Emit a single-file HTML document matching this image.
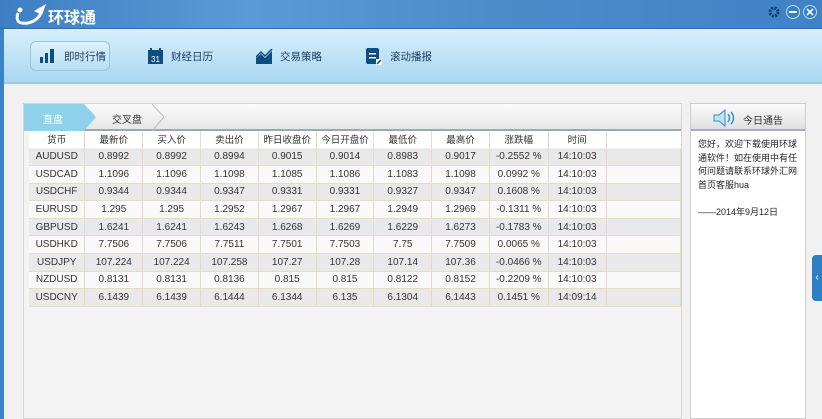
<!DOCTYPE html>
<html><head><meta charset="utf-8"><style>
*{margin:0;padding:0;box-sizing:border-box}
body{width:822px;height:419px;overflow:hidden;position:relative;background:#efefef;font-family:"Liberation Sans","Noto Sans CJK SC",sans-serif;font-size:10px;color:#333}
.title{position:absolute;left:0;top:0;width:822px;height:29px;background:linear-gradient(90deg,#3d7fc3 0%,#5a9ad6 30%,#4d8ccb 60%,#3f82c6 100%);border-bottom:1px solid #2f6eae}
.tool{position:absolute;left:4px;top:29px;width:818px;height:55px;background:linear-gradient(#d6effb,#aad7f1);border-bottom:2px solid #9ec7e2}
.lb{position:absolute;left:0;top:29px;width:4px;height:390px;background:#3b82c8}
.main{position:absolute;left:4px;top:86px;width:818px;height:333px;background:#f1f1f1}
.panel{position:absolute;left:23px;top:103px;width:659px;height:316px;background:#f3f3f3;border:1px solid #d5d5d5}
.tabs{height:27px;background:linear-gradient(#fbfbfb,#e6e6e6);border-bottom:2px solid #9aa;position:relative}
table{border-collapse:collapse;position:absolute;left:5px;top:27px;background:#fff}
td{height:17.6px;text-align:center;border-right:1px solid #e6dcc0;border-bottom:1px solid #e6dcc0;font-size:10px}
tr:nth-child(even) td{background:#e9e9e9}
tr:nth-child(odd) td{background:#f9f9f9}
tr.h td{background:#fff;border-bottom:1px solid #eee;height:17px;font-size:9.5px}
.rp{position:absolute;left:690px;top:103px;width:116px;height:316px;background:#fff;border:1px solid #ccc}
.rh{height:27px;background:linear-gradient(#fafafa,#e0e0e0);border-bottom:2px solid #aab;position:relative}
.tb{position:absolute;top:15px;height:24px;display:flex;align-items:center;font-size:10.5px;color:#1d3b5b}
</style></head><body>
<div class="title">
<svg style="position:absolute;left:12px;top:3px" width="36" height="24"><path d="M6 10 Q2 22 16 20 Q26 18 30 8" fill="none" stroke="#fff" stroke-width="3"/><circle cx="8" cy="7" r="2.5" fill="#fff"/><path d="M22 8 L34 1 L30 12 Z" fill="#fff"/></svg>
<div style="position:absolute;left:48px;top:4px;color:#fff;font-weight:bold;font-size:16px">环球通</div>
<svg style="position:absolute;left:767px;top:4px" width="52" height="16"><circle cx="7" cy="8" r="4" fill="none" stroke="#0b3f6e" stroke-width="3" stroke-dasharray="2 1.2"/><circle cx="26" cy="8" r="6.5" fill="#2f7fc6" stroke="#cde" /><rect x="22" y="7" width="8" height="2" fill="#fff"/><circle cx="43" cy="8" r="6.5" fill="#2f7fc6" stroke="#cde"/><path d="M40 5 L46 11 M46 5 L40 11" stroke="#fff" stroke-width="1.6"/></svg>
</div>
<div class="tool">
<div style="position:absolute;left:26px;top:12px;width:80px;height:30px;border:1px solid #9cc3df;border-radius:6px;background:linear-gradient(#def1fb,#b7def3)"></div>
<div class="tb" style="left:36px"><svg width="16" height="14"><rect x="0" y="8" width="3" height="6" fill="#0d4d82"/><rect x="5" y="4" width="3" height="10" fill="#0d4d82"/><rect x="10" y="0" width="4" height="14" fill="#0d4d82"/></svg><span style="margin-left:8px">即时行情</span></div>
<div class="tb" style="left:144px"><svg width="16" height="16"><rect x="0" y="2" width="15" height="14" fill="#0d4d82"/><rect x="2" y="0" width="2" height="4" fill="#0d4d82"/><rect x="11" y="0" width="2" height="4" fill="#0d4d82"/><text x="3" y="14" font-size="8" fill="#fff" font-family="Liberation Sans">31</text></svg><span style="margin-left:7px">财经日历</span></div>
<div class="tb" style="left:252px"><svg width="17" height="15"><path d="M0 15 V9 L5 5 L9 9 L16 2 V15 Z" fill="#0d4d82"/><path d="M0 8 L5 3 L9 7 L16 0" stroke="#0d4d82" stroke-width="1.5" fill="none"/></svg><span style="margin-left:7px">交易策略</span></div>
<div class="tb" style="left:362px"><svg width="16" height="17"><rect x="0" y="0" width="13" height="16" rx="2" fill="#0d4d82"/><rect x="3" y="5" width="7" height="1.5" fill="#fff"/><rect x="3" y="9" width="7" height="1.5" fill="#fff"/><rect x="10" y="11" width="6" height="6" fill="#fff"/><path d="M11 16 L15 12" stroke="#0d4d82" stroke-width="1.5"/></svg><span style="margin-left:8px">滚动播报</span></div>
</div>
<div class="lb"></div>
<div class="main"></div>
<div class="panel">
<div class="tabs">
<svg style="position:absolute;left:0;top:0" width="140" height="27"><path d="M0 0 H60 L72 13 L60 27 H0 Z" fill="#8fd0ea"/><path d="M128 0 L140 13 L128 27" fill="none" stroke="#bbb"/></svg>
<span style="position:absolute;left:19px;top:7px;color:#fff;font-size:10px">直盘</span>
<span style="position:absolute;left:88px;top:7px;font-size:10px;color:#333">交叉盘</span>
</div>
<table>
<tr class="h"><td style="width:56px">货币</td><td style="width:58px">最新价</td><td style="width:58px">买入价</td><td style="width:58px">卖出价</td><td style="width:58px">昨日收盘价</td><td style="width:58px">今日开盘价</td><td style="width:58px">最低价</td><td style="width:58px">最高价</td><td style="width:59px">涨跌幅</td><td style="width:58px">时间</td><td style="width:75px;border-right:none"></td></tr>
<tr><td>AUDUSD</td><td>0.8992</td><td>0.8992</td><td>0.8994</td><td>0.9015</td><td>0.9014</td><td>0.8983</td><td>0.9017</td><td>-0.2552 %</td><td>14:10:03</td><td></td></tr>
<tr><td>USDCAD</td><td>1.1096</td><td>1.1096</td><td>1.1098</td><td>1.1085</td><td>1.1086</td><td>1.1083</td><td>1.1098</td><td>0.0992 %</td><td>14:10:03</td><td></td></tr>
<tr><td>USDCHF</td><td>0.9344</td><td>0.9344</td><td>0.9347</td><td>0.9331</td><td>0.9331</td><td>0.9327</td><td>0.9347</td><td>0.1608 %</td><td>14:10:03</td><td></td></tr>
<tr><td>EURUSD</td><td>1.295</td><td>1.295</td><td>1.2952</td><td>1.2967</td><td>1.2967</td><td>1.2949</td><td>1.2969</td><td>-0.1311 %</td><td>14:10:03</td><td></td></tr>
<tr><td>GBPUSD</td><td>1.6241</td><td>1.6241</td><td>1.6243</td><td>1.6268</td><td>1.6269</td><td>1.6229</td><td>1.6273</td><td>-0.1783 %</td><td>14:10:03</td><td></td></tr>
<tr><td>USDHKD</td><td>7.7506</td><td>7.7506</td><td>7.7511</td><td>7.7501</td><td>7.7503</td><td>7.75</td><td>7.7509</td><td>0.0065 %</td><td>14:10:03</td><td></td></tr>
<tr><td>USDJPY</td><td>107.224</td><td>107.224</td><td>107.258</td><td>107.27</td><td>107.28</td><td>107.14</td><td>107.36</td><td>-0.0466 %</td><td>14:10:03</td><td></td></tr>
<tr><td>NZDUSD</td><td>0.8131</td><td>0.8131</td><td>0.8136</td><td>0.815</td><td>0.815</td><td>0.8122</td><td>0.8152</td><td>-0.2209 %</td><td>14:10:03</td><td></td></tr>
<tr><td>USDCNY</td><td>6.1439</td><td>6.1439</td><td>6.1444</td><td>6.1344</td><td>6.135</td><td>6.1304</td><td>6.1443</td><td>0.1451 %</td><td>14:09:14</td><td></td></tr>
</table>
</div>
<div class="rp">
<div class="rh">
<svg style="position:absolute;left:22px;top:5px" width="26" height="18"><path d="M1 6 H6 L12 1 V17 L6 12 H1 Z" fill="#bfe3f2" stroke="#3a8dbf"/><path d="M15 5 Q18 9 15 13 M18 3 Q23 9 18 15" fill="none" stroke="#3a8dbf" stroke-width="1.5"/></svg>
<span style="position:absolute;left:52px;top:8px;font-size:10px">今日通告</span>
</div>
<div style="padding:7px 4px 0 7px;font-size:9px;line-height:13.5px;color:#222">您好，欢迎下载使用环球<br>通软件！如在使用中有任<br>何问题请联系环球外汇网<br>首页客服hua<br><br>——2014年9月12日</div>
</div>
<div style="position:absolute;left:812px;top:255px;width:10px;height:46px;background:#2d7fc3;border-radius:4px 0 0 4px;color:#fff;font-size:10px;line-height:46px;text-align:center">‹</div>
</body></html>
